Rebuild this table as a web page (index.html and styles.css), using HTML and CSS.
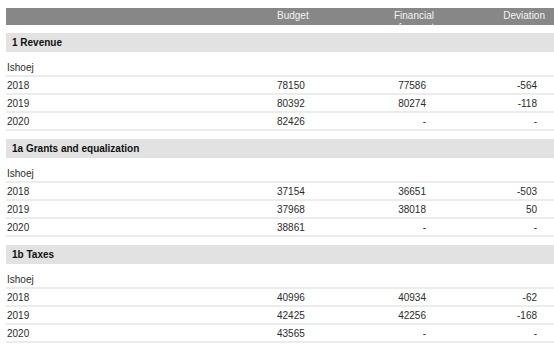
FILE: index.html
```html
<!DOCTYPE html>
<html>
<head>
<meta charset="utf-8">
<link rel="stylesheet" href="styles.css">
</head>
<body>
<div class="report">
  <div class="head">
    <div class="hc"></div>
    <div class="hc left">Budget</div>
    <div class="hc right">Financial<br>forecast</div>
    <div class="hc right">Deviation</div>
  </div>

  <div class="section">
    <div class="title">1 Revenue</div>
    <div class="group">Ishoej</div>
    <div class="row"><span>2018</span><span>78150</span><span class="r">77586</span><span class="r">-564</span></div>
    <div class="row"><span>2019</span><span>80392</span><span class="r">80274</span><span class="r">-118</span></div>
    <div class="row"><span>2020</span><span>82426</span><span class="r">-</span><span class="r">-</span></div>
  </div>

  <div class="section">
    <div class="title">1a Grants and equalization</div>
    <div class="group">Ishoej</div>
    <div class="row"><span>2018</span><span>37154</span><span class="r">36651</span><span class="r">-503</span></div>
    <div class="row"><span>2019</span><span>37968</span><span class="r">38018</span><span class="r">50</span></div>
    <div class="row"><span>2020</span><span>38861</span><span class="r">-</span><span class="r">-</span></div>
  </div>

  <div class="section">
    <div class="title">1b Taxes</div>
    <div class="group">Ishoej</div>
    <div class="row"><span>2018</span><span>40996</span><span class="r">40934</span><span class="r">-62</span></div>
    <div class="row"><span>2019</span><span>42425</span><span class="r">42256</span><span class="r">-168</span></div>
    <div class="row"><span>2020</span><span>43565</span><span class="r">-</span><span class="r">-</span></div>
  </div>
</div>
</body>
</html>
```
FILE: styles.css
```css
html, body {
  margin: 0;
  padding: 0;
  background: #fff;
}
body {
  font-family: "Liberation Sans", Arial, sans-serif;
  font-size: 10px;
  color: #2b2b2b;
}
.report {
  padding: 8px 0 0 6px;
}
.head {
  display: grid;
  grid-template-columns: 271px 75px 82px 111px 9px;
  height: 17px;
  overflow: hidden;
  background: #878787;
  color: #f4f4f4;
}
.hc {
  padding-top: 2px;
  line-height: 12px;
}
.left { text-align: left; }
.right { text-align: right; }
.section {
  margin-top: 8px;
  margin-bottom: 1px;
}
.title {
  height: 19px;
  line-height: 19px;
  background: #e2e2e2;
  font-weight: bold;
  color: #111;
  padding-left: 6px;
}
.group {
  margin-top: 6px;
  padding-top: 3px;
  height: 14px;
  line-height: 14px;
  border-bottom: 2px solid #ececec;
  padding-left: 1px;
}
.row {
  display: grid;
  grid-template-columns: 271px 75px 74px 111px 11px;
  padding-top: 2px;
  height: 14px;
  line-height: 14px;
  border-bottom: 2px solid #ececec;
}
.row span:first-child {
  padding-left: 1px;
}
.r { text-align: right; }
```
